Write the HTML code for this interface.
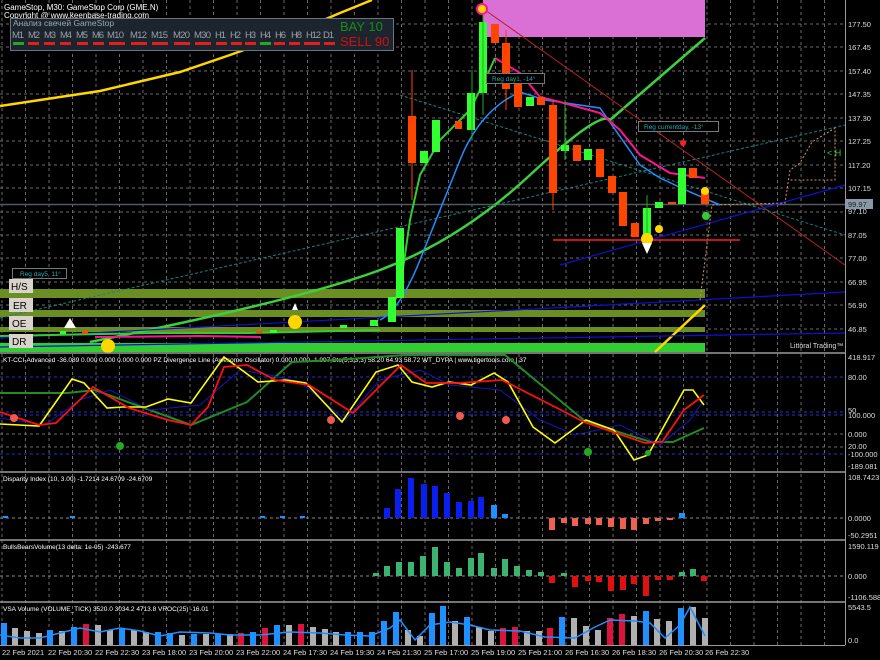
<!DOCTYPE html>
<html><head><meta charset="utf-8"><style>
html,body{margin:0;padding:0;background:#000;width:880px;height:660px;overflow:hidden}
svg{display:block;font-family:"Liberation Sans",sans-serif}
</style></head><body>
<svg width="880" height="660" viewBox="0 0 880 660" xmlns="http://www.w3.org/2000/svg">
<defs>
<pattern id="vg" x="1.5" y="0" width="23.5" height="6" patternUnits="userSpaceOnUse"><rect x="0" y="0" width="1" height="3" fill="#6a6a6a"/></pattern>
</defs>
<rect width="880" height="660" fill="#000"/>
<rect x="0" y="0" width="845" height="645" fill="url(#vg)"/>
<g stroke="#6a6a6a" stroke-dasharray="3 3" stroke-width="1">
<line x1="0" y1="24" x2="845" y2="24"/><line x1="0" y1="47" x2="845" y2="47"/><line x1="0" y1="71" x2="845" y2="71"/><line x1="0" y1="94" x2="845" y2="94"/><line x1="0" y1="118" x2="845" y2="118"/><line x1="0" y1="141" x2="845" y2="141"/><line x1="0" y1="165" x2="845" y2="165"/><line x1="0" y1="188" x2="845" y2="188"/><line x1="0" y1="212" x2="845" y2="212"/><line x1="0" y1="235" x2="845" y2="235"/><line x1="0" y1="258" x2="845" y2="258"/><line x1="0" y1="282" x2="845" y2="282"/><line x1="0" y1="305" x2="845" y2="305"/><line x1="0" y1="329" x2="845" y2="329"/>
<line x1="0" y1="434" x2="845" y2="434"/><line x1="0" y1="447" x2="845" y2="447"/>
</g>
<g stroke="#2233cc" stroke-dasharray="3 3" stroke-width="1">
<line x1="0" y1="377" x2="845" y2="377"/><line x1="0" y1="412" x2="845" y2="412"/><line x1="0" y1="415" x2="845" y2="415"/><line x1="0" y1="454" x2="845" y2="454"/>
</g>
<g stroke="#888" stroke-dasharray="3 3"><line x1="0" y1="518" x2="845" y2="518"/><line x1="0" y1="576" x2="845" y2="576"/></g>

<rect x="0" y="289" width="705" height="9" fill="#6b8e23"/>
<rect x="0" y="310" width="705" height="7" fill="#6b8e23"/>
<rect x="0" y="327" width="705" height="5" fill="#6b8e23"/>
<rect x="0" y="343" width="705" height="9" fill="#32cd32"/>
<rect x="483" y="0" width="222" height="37" fill="#da70d6"/>

<line x1="0" y1="204.5" x2="845" y2="204.5" stroke="#505860" stroke-width="1.5"/>
<polyline points="0,106 100,91 180,72 230,55 300,30 340,13 372,0" stroke="#ffd700" stroke-width="2.5" fill="none"/>
<line x1="655" y1="352" x2="705" y2="305" stroke="#ffd700" stroke-width="2.5"/>
<path d="M90 342 Q300 300 380 270 T530 175 T610 120 L705 38" stroke="#3ecf3e" stroke-width="2.5" fill="none"/>
<line x1="485" y1="10" x2="845" y2="265" stroke="#b22222" stroke-width="1"/>
<line x1="0" y1="338" x2="845" y2="292" stroke="#1010d0" stroke-width="1.2"/>
<line x1="0" y1="347" x2="845" y2="333" stroke="#1010d0" stroke-width="1.2"/>
<line x1="560" y1="265" x2="845" y2="185" stroke="#1010d0" stroke-width="1.2"/>
<line x1="0" y1="318" x2="845" y2="125" stroke="#1a8080" stroke-dasharray="3 2"/>
<line x1="400" y1="95" x2="845" y2="235" stroke="#1a8080" stroke-dasharray="3 2"/>
<path d="M700 300 L712 205 L785 203 L790 170 L800 163 L812 142 L835 128 L835 180 L790 180" stroke="#d2935a" stroke-dasharray="2 2" fill="none"/>
<line x1="553" y1="240" x2="740" y2="240" stroke="#ff2020" stroke-width="1.5"/>
<path d="M380 320 Q400 310 420 260 T460 160 T520 92 L545 100 L600 108 L640 165 L660 178 L690 192 L720 205" stroke="#1e90ff" stroke-width="1.5" fill="none"/>
<path d="M495 58 L520 73 L540 97 L560 102 L600 113 L620 130 L640 155 L670 173 L705 178" stroke="#ff1493" stroke-width="2" fill="none"/>
<path d="M395 300 L400 290 L410 220 L420 175 L440 140 L470 110 L485 80 L495 58" stroke="#32cd32" stroke-width="2" fill="none"/>
<path d="M0 336 L150 333 L250 333 L380 330" stroke="#32cd32" stroke-width="2" fill="none"/>
<path d="M95 337 L200 336 L260 337" stroke="#ff1493" stroke-width="2" fill="none"/>

<g fill="#32ff32">
<rect x="388" y="297" width="8" height="25"/><rect x="396" y="228" width="8" height="70"/>
<rect x="420" y="151" width="8" height="12"/><rect x="432" y="120" width="8" height="32"/>
<rect x="467" y="93" width="8" height="37"/><rect x="479" y="22" width="8" height="71"/>
<rect x="526" y="97" width="8" height="9"/><rect x="561" y="145" width="8" height="6"/>
<rect x="584" y="149" width="8" height="11"/><rect x="643" y="208" width="8" height="32"/>
<rect x="655" y="202" width="8" height="6"/><rect x="678" y="168" width="8" height="36"/>
<rect x="370" y="320" width="8" height="6"/><rect x="340" y="325" width="7" height="3"/><rect x="270" y="330" width="7" height="3"/><rect x="60" y="331" width="6" height="3"/>
</g>
<g fill="#ff4500">
<rect x="408" y="116" width="8" height="47"/><rect x="455" y="121" width="7" height="8"/>
<rect x="491" y="24" width="8" height="19"/><rect x="502" y="43" width="8" height="46"/>
<rect x="514" y="84" width="8" height="23"/><rect x="537" y="97" width="8" height="8"/>
<rect x="549" y="105" width="8" height="88"/><rect x="573" y="145" width="8" height="16"/>
<rect x="596" y="149" width="8" height="28"/><rect x="608" y="176" width="8" height="17"/>
<rect x="619" y="192" width="8" height="34"/><rect x="631" y="223" width="8" height="14"/>
<rect x="689" y="168" width="8" height="10"/><rect x="701" y="190" width="8" height="14"/>
<rect x="668" y="202" width="8" height="2"/><rect x="82" y="331" width="6" height="3"/><rect x="256" y="331" width="7" height="2"/>
</g>
<g stroke="#ff4500" stroke-width="1"><line x1="412" y1="70" x2="412" y2="200"/><line x1="553" y1="100" x2="553" y2="210"/><line x1="506" y1="30" x2="506" y2="110"/></g>
<g stroke="#22aa22" stroke-width="1"><line x1="472" y1="70" x2="472" y2="140"/><line x1="483" y1="15" x2="483" y2="115"/><line x1="565" y1="100" x2="565" y2="160"/><line x1="647" y1="195" x2="647" y2="250"/></g>
<circle cx="482" cy="9" r="5" fill="#ffd700" stroke="#ff1493" stroke-width="2"/>
<circle cx="683" cy="143" r="3" fill="#ff2020"/>
<circle cx="705" cy="191" r="4" fill="#ffd700"/><circle cx="706" cy="216" r="4" fill="#32cd32"/>
<circle cx="659" cy="229" r="4" fill="#ffd700"/><circle cx="647" cy="239" r="6" fill="#ffd700"/>
<circle cx="295" cy="322" r="7" fill="#ffd700"/><circle cx="108" cy="346" r="7" fill="#ffd700"/>
<path d="M292 310 L298 310 L295 303 Z" fill="#fff"/><path d="M70 318 L76 328 L64 328 Z" fill="#fff"/>
<path d="M642 243 L652 243 L647 254 Z" fill="#fff"/>

<text x="4" y="10" font-size="8" fill="#fff">GameStop, M30:  GameStop Corp (GME.N)</text>
<text x="4" y="18" font-size="8" fill="#fff">Copyright @ www.keenbase-trading.com</text>
<rect x="10.5" y="18.5" width="383" height="32" fill="#1c252e" stroke="#6a7480"/>
<text x="13" y="26" font-size="8.5" fill="#9aa">Анализ свечей GameStop</text>
<g font-size="9.5" fill="#9aa0a6">
<text x="12" y="38" textLength="12">M1</text><text x="28" y="38" textLength="12">M2</text><text x="44" y="38" textLength="12">M3</text><text x="60" y="38" textLength="12">M4</text><text x="76" y="38" textLength="12">M5</text><text x="92" y="38" textLength="12">M6</text><text x="107" y="38" textLength="17">M10</text><text x="130" y="38" textLength="17">M12</text><text x="151" y="38" textLength="17">M15</text><text x="173" y="38" textLength="17">M20</text><text x="194" y="38" textLength="17">M30</text><text x="215" y="38" textLength="11">H1</text><text x="230" y="38" textLength="11">H2</text><text x="245" y="38" textLength="11">H3</text><text x="260" y="38" textLength="11">H4</text><text x="275" y="38" textLength="11">H6</text><text x="291" y="38" textLength="11">H8</text><text x="306" y="38" textLength="15">H12</text><text x="323" y="38" textLength="11">D1</text>
</g>
<g fill="#e02020">
<rect x="28" y="42" width="11" height="3"/><rect x="44" y="42" width="11" height="3"/><rect x="60" y="42" width="11" height="3"/><rect x="77" y="42" width="11" height="3"/><rect x="93" y="42" width="11" height="3"/><rect x="109" y="42" width="16" height="3"/><rect x="131" y="42" width="16" height="3"/><rect x="152" y="42" width="16" height="3"/><rect x="174" y="42" width="16" height="3"/><rect x="195" y="42" width="16" height="3"/><rect x="216" y="42" width="11" height="3"/><rect x="231" y="42" width="11" height="3"/><rect x="245" y="42" width="11" height="3"/><rect x="274" y="42" width="11" height="3"/><rect x="289" y="42" width="11" height="3"/><rect x="304" y="42" width="16" height="3"/><rect x="324" y="42" width="11" height="3"/>
</g>
<rect x="13" y="42" width="11" height="3" fill="#28a428"/><rect x="260" y="42" width="11" height="3" fill="#28a428"/>
<text x="340" y="31" font-size="13" fill="#1a8a1a">BAY   10</text>
<text x="340" y="46" font-size="13" fill="#d01010">SELL 90</text>

<rect x="12.5" y="268.5" width="54" height="10" fill="#000" stroke="#777"/><text x="20" y="276" font-size="6.5" fill="#2aa">Reg day5, 11°</text>
<rect x="486.5" y="73.5" width="58" height="10" fill="#000" stroke="#777"/><text x="492" y="81" font-size="6.5" fill="#2aa">Reg day1, -14°</text>
<rect x="638.5" y="121.5" width="80" height="10" fill="#000" stroke="#777"/><text x="644" y="129" font-size="6.5" fill="#2aa">Reg currentday, -13°</text>
<text x="827" y="156" font-size="9" fill="#32cd32">&lt; H</text>
<g font-size="10" fill="#000">
<rect x="9" y="279" width="24" height="14" fill="#d8d4cc"/><text x="11" y="290">H/S</text>
<rect x="9" y="298" width="24" height="14" fill="#d8d4cc"/><text x="13" y="309">ER</text>
<rect x="9" y="316" width="24" height="14" fill="#d8d4cc"/><text x="12" y="327">OE</text>
<rect x="9" y="334" width="24" height="14" fill="#d8d4cc"/><text x="12" y="345">DR</text>
</g>
<text x="790" y="348" font-size="7" fill="#ddd">Littoral Trading™</text>

<g stroke="#9a9a9a" stroke-width="1.5"><line x1="0" y1="353" x2="845" y2="353"/><line x1="0" y1="472" x2="845" y2="472"/><line x1="0" y1="540" x2="845" y2="540"/><line x1="0" y1="602" x2="845" y2="602"/></g>
<line x1="845.5" y1="0" x2="845.5" y2="645" stroke="#9a9a9a"/>
<line x1="0" y1="645.5" x2="845" y2="645.5" stroke="#9a9a9a"/>

<text x="3" y="362" font-size="6.5" fill="#fff">KT-CCI-Advanced -36.089 0.000 0.000 0.000 0.000 PZ Divergence Line (Awesome Oscillator) 0.000 0.000 -1.997 Sto(5,3,3,3) 58.20 64.93 58.72 WT_DYPA | www.tigertools.com | 37</text>
<polyline fill="none" stroke="#228b22" stroke-width="2" points="0,393 67,393 95,390 191,425 247,402 292,362 337,360 404,355 505,355 586,422 651,442 673,442 704,428"/>
<polyline fill="none" stroke="#1515c0" stroke-width="1" points="0,418 45,425 80,400 110,390 150,410 200,405 240,370 270,375 300,382 345,420 380,380 420,370 450,385 500,390 540,420 575,435 620,425 660,445 690,420 704,400"/>
<polyline fill="none" stroke="#ffff00" stroke-width="1.6" points="0,424 39,426 72,379 84,383 107,408 123,407 146,407 168,399 191,403 224,357 258,382 286,380 306,383 342,422 376,372 398,365 412,382 432,387 449,382 471,385 494,373 508,382 533,427 555,443 586,420 614,430 634,460 648,455 684,390 693,390 704,405"/>
<polyline fill="none" stroke="#ff1010" stroke-width="1.8" points="0,412 39,425 56,423 93,387 129,408 168,420 191,425 208,407 224,367 247,365 275,380 309,385 353,413 401,365 426,383 460,383 502,380 561,410 584,422 645,443 662,442 684,410 704,395"/>
<g fill="#f05a4a"><circle cx="14" cy="418" r="4"/><circle cx="331" cy="420" r="4"/><circle cx="460" cy="416" r="4"/><circle cx="506" cy="420" r="4"/></g>
<g fill="#22aa22"><circle cx="120" cy="446" r="4"/><circle cx="588" cy="452" r="4"/><circle cx="648" cy="453" r="3"/></g>

<text x="3" y="481" font-size="6.5" fill="#fff">Disparity Index (10, 3.00) -1.7214 24.6709 -24.6709</text>
<g fill="#0a1ef0">
<rect x="384" y="508" width="6" height="10"/><rect x="395" y="489" width="6" height="29"/><rect x="408" y="478" width="6" height="40"/><rect x="421" y="484" width="6" height="34"/><rect x="432" y="486" width="6" height="32"/><rect x="444" y="493" width="6" height="25"/><rect x="456" y="502" width="6" height="16"/><rect x="468" y="501" width="6" height="17"/><rect x="478" y="497" width="6" height="21"/>
</g>
<g fill="#1e90ff"><rect x="491" y="505" width="6" height="13"/><rect x="502" y="514" width="6" height="4"/><rect x="679" y="513" width="6" height="5"/><rect x="3" y="516" width="5" height="2"/><rect x="70" y="516" width="5" height="2"/><rect x="260" y="516" width="5" height="2"/><rect x="280" y="516" width="5" height="2"/><rect x="300" y="516" width="5" height="2"/></g>
<g fill="#f06050">
<rect x="549" y="518" width="6" height="12"/><rect x="561" y="518" width="6" height="5"/><rect x="572" y="518" width="6" height="8"/><rect x="585" y="518" width="6" height="6"/><rect x="596" y="518" width="6" height="7"/><rect x="608" y="518" width="6" height="9"/><rect x="620" y="518" width="6" height="11"/><rect x="631" y="518" width="6" height="12"/><rect x="643" y="518" width="6" height="6"/><rect x="655" y="518" width="6" height="3"/><rect x="667" y="518" width="6" height="2"/>
</g>

<text x="3" y="549" font-size="6.5" fill="#fff">BullsBearsVolume(13  delta: 1e-05)  -243.677</text>
<g fill="#3cb371">
<rect x="373" y="573" width="6" height="3"/><rect x="384" y="566" width="6" height="10"/><rect x="396" y="562" width="6" height="14"/><rect x="408" y="562" width="6" height="14"/><rect x="420" y="556" width="6" height="20"/><rect x="432" y="547" width="6" height="29"/><rect x="444" y="562" width="6" height="14"/><rect x="456" y="568" width="6" height="8"/><rect x="468" y="558" width="6" height="18"/><rect x="478" y="553" width="6" height="23"/><rect x="491" y="568" width="6" height="8"/><rect x="502" y="559" width="6" height="17"/><rect x="514" y="566" width="6" height="10"/><rect x="526" y="570" width="6" height="6"/><rect x="538" y="572" width="6" height="4"/><rect x="561" y="573" width="6" height="3"/><rect x="679" y="572" width="6" height="4"/><rect x="690" y="569" width="6" height="7"/>
</g>
<g fill="#e01010">
<rect x="549" y="576" width="6" height="7"/><rect x="572" y="576" width="6" height="11"/><rect x="585" y="576" width="6" height="5"/><rect x="596" y="576" width="6" height="6"/><rect x="608" y="576" width="6" height="15"/><rect x="620" y="576" width="6" height="14"/><rect x="631" y="576" width="6" height="8"/><rect x="643" y="576" width="6" height="20"/><rect x="655" y="576" width="6" height="4"/><rect x="667" y="576" width="6" height="4"/><rect x="701" y="576" width="6" height="5"/>
</g>

<text x="3" y="611" font-size="6.5" fill="#fff">VSA Volume (VOLUME_TICK) 3520.0 3034.2 4713.8 VROC(25) -16.01</text>
<g>
<rect x="1" y="623" width="6" height="22" fill="#1e90ff"/><rect x="12" y="628" width="6" height="17" fill="#b0b0b0"/><rect x="24" y="631" width="6" height="14" fill="#b0b0b0"/><rect x="36" y="633" width="6" height="12" fill="#b0b0b0"/><rect x="47" y="630" width="6" height="15" fill="#1e90ff"/><rect x="59" y="631" width="6" height="14" fill="#b0b0b0"/><rect x="71" y="627" width="6" height="18" fill="#1e90ff"/><rect x="83" y="624" width="6" height="21" fill="#dc143c"/><rect x="95" y="625" width="6" height="20" fill="#b0b0b0"/><rect x="107" y="630" width="6" height="15" fill="#b0b0b0"/><rect x="119" y="629" width="6" height="16" fill="#1e90ff"/><rect x="131" y="630" width="6" height="15" fill="#b0b0b0"/><rect x="143" y="632" width="6" height="13" fill="#b0b0b0"/><rect x="155" y="632" width="6" height="13" fill="#1e90ff"/><rect x="167" y="633" width="6" height="12" fill="#1e90ff"/><rect x="179" y="635" width="6" height="10" fill="#b0b0b0"/><rect x="191" y="634" width="6" height="11" fill="#1e90ff"/><rect x="203" y="634" width="6" height="11" fill="#b0b0b0"/><rect x="215" y="634" width="6" height="11" fill="#1e90ff"/><rect x="227" y="634" width="6" height="11" fill="#b0b0b0"/><rect x="238" y="633" width="6" height="12" fill="#dc143c"/><rect x="250" y="632" width="6" height="13" fill="#1e90ff"/><rect x="262" y="628" width="6" height="17" fill="#dc143c"/><rect x="274" y="625" width="6" height="20" fill="#1e90ff"/><rect x="286" y="625" width="6" height="20" fill="#b0b0b0"/><rect x="298" y="624" width="6" height="21" fill="#dc143c"/><rect x="310" y="627" width="6" height="18" fill="#b0b0b0"/><rect x="322" y="629" width="6" height="16" fill="#b0b0b0"/><rect x="333" y="632" width="6" height="13" fill="#b0b0b0"/><rect x="345" y="632" width="6" height="13" fill="#1e90ff"/><rect x="357" y="632" width="6" height="13" fill="#1e90ff"/><rect x="369" y="632" width="6" height="13" fill="#1e90ff"/><rect x="381" y="621" width="6" height="24" fill="#1e90ff"/><rect x="393" y="612" width="6" height="33" fill="#1e90ff"/><rect x="405" y="630" width="6" height="15" fill="#b0b0b0"/><rect x="417" y="636" width="6" height="9" fill="#b0b0b0"/><rect x="429" y="613" width="6" height="32" fill="#1e90ff"/><rect x="440" y="606" width="6" height="39" fill="#1e90ff"/><rect x="452" y="621" width="6" height="24" fill="#b0b0b0"/><rect x="464" y="617" width="6" height="28" fill="#1e90ff"/><rect x="476" y="627" width="6" height="18" fill="#b0b0b0"/><rect x="488" y="631" width="6" height="14" fill="#b0b0b0"/><rect x="500" y="628" width="6" height="17" fill="#dc143c"/><rect x="512" y="627" width="6" height="18" fill="#dc143c"/><rect x="524" y="631" width="6" height="14" fill="#b0b0b0"/><rect x="536" y="631" width="6" height="14" fill="#b0b0b0"/><rect x="547" y="628" width="6" height="17" fill="#dc143c"/><rect x="559" y="617" width="6" height="28" fill="#1e90ff"/><rect x="571" y="618" width="6" height="27" fill="#b0b0b0"/><rect x="583" y="626" width="6" height="19" fill="#b0b0b0"/><rect x="595" y="630" width="6" height="15" fill="#b0b0b0"/><rect x="607" y="618" width="6" height="27" fill="#dc143c"/><rect x="619" y="614" width="6" height="31" fill="#dc143c"/><rect x="631" y="616" width="6" height="29" fill="#b0b0b0"/><rect x="643" y="611" width="6" height="34" fill="#1e90ff"/><rect x="654" y="619" width="6" height="26" fill="#b0b0b0"/><rect x="666" y="621" width="6" height="24" fill="#b0b0b0"/><rect x="678" y="608" width="6" height="37" fill="#1e90ff"/><rect x="690" y="607" width="6" height="38" fill="#b0b0b0"/><rect x="702" y="618" width="6" height="27" fill="#b0b0b0"/>
</g>
<polyline fill="none" stroke="#1e90ff" stroke-width="1.5" points="0,635 20,638 40,638 60,633 80,628 100,632 120,628 140,631 160,636 180,632 210,633 230,635 260,635 290,632 320,633 345,635 370,636 390,628 400,620 415,640 430,625 450,622 470,625 490,630 520,631 545,637 575,638 595,627 610,620 635,621 650,623 665,638 680,625 690,607 705,636"/>

<g font-size="7.5" fill="#ddd">
<text x="848" y="27">177.50</text><text x="848" y="50">167.45</text><text x="848" y="74">157.40</text><text x="848" y="97">147.35</text><text x="848" y="121">137.30</text><text x="848" y="144">127.25</text><text x="848" y="168">117.20</text><text x="848" y="191">107.15</text><text x="848" y="214">97.10</text><text x="848" y="238">87.05</text><text x="848" y="261">77.00</text><text x="848" y="285">66.95</text><text x="848" y="308">56.90</text><text x="848" y="332">46.85</text>
<text x="848" y="360">418.917</text><text x="848" y="380">80.00</text><text x="848" y="413">50</text><text x="848" y="418">100.000</text><text x="848" y="437">0.000</text><text x="848" y="449">20.00</text><text x="848" y="457">-100.000</text><text x="848" y="469">-189.081</text>
<text x="848" y="480">108.7423</text><text x="848" y="521">0.0000</text><text x="848" y="538">-50.2951</text>
<text x="848" y="549">1590.119</text><text x="848" y="579">0.000</text><text x="848" y="600">-1106.588</text>
<text x="848" y="610">5543.5</text><text x="848" y="643">0.0</text>
</g>
<rect x="846" y="199" width="27" height="10" fill="#8899aa"/><text x="848" y="207" font-size="7.5" fill="#222">99.97</text>

<g font-size="7.5" fill="#ddd">
<text x="2" y="655">22 Feb 2021</text><text x="48" y="655">22 Feb 20:30</text><text x="95" y="655">22 Feb 22:30</text><text x="142" y="655">23 Feb 18:00</text><text x="189" y="655">23 Feb 20:00</text><text x="236" y="655">23 Feb 22:00</text><text x="283" y="655">24 Feb 17:30</text><text x="330" y="655">24 Feb 19:30</text><text x="377" y="655">24 Feb 21:30</text><text x="424" y="655">25 Feb 17:00</text><text x="471" y="655">25 Feb 19:00</text><text x="518" y="655">25 Feb 21:00</text><text x="565" y="655">26 Feb 16:30</text><text x="612" y="655">26 Feb 18:30</text><text x="659" y="655">26 Feb 20:30</text><text x="705" y="655">26 Feb 22:30</text>
</g>
</svg>
</body></html>
